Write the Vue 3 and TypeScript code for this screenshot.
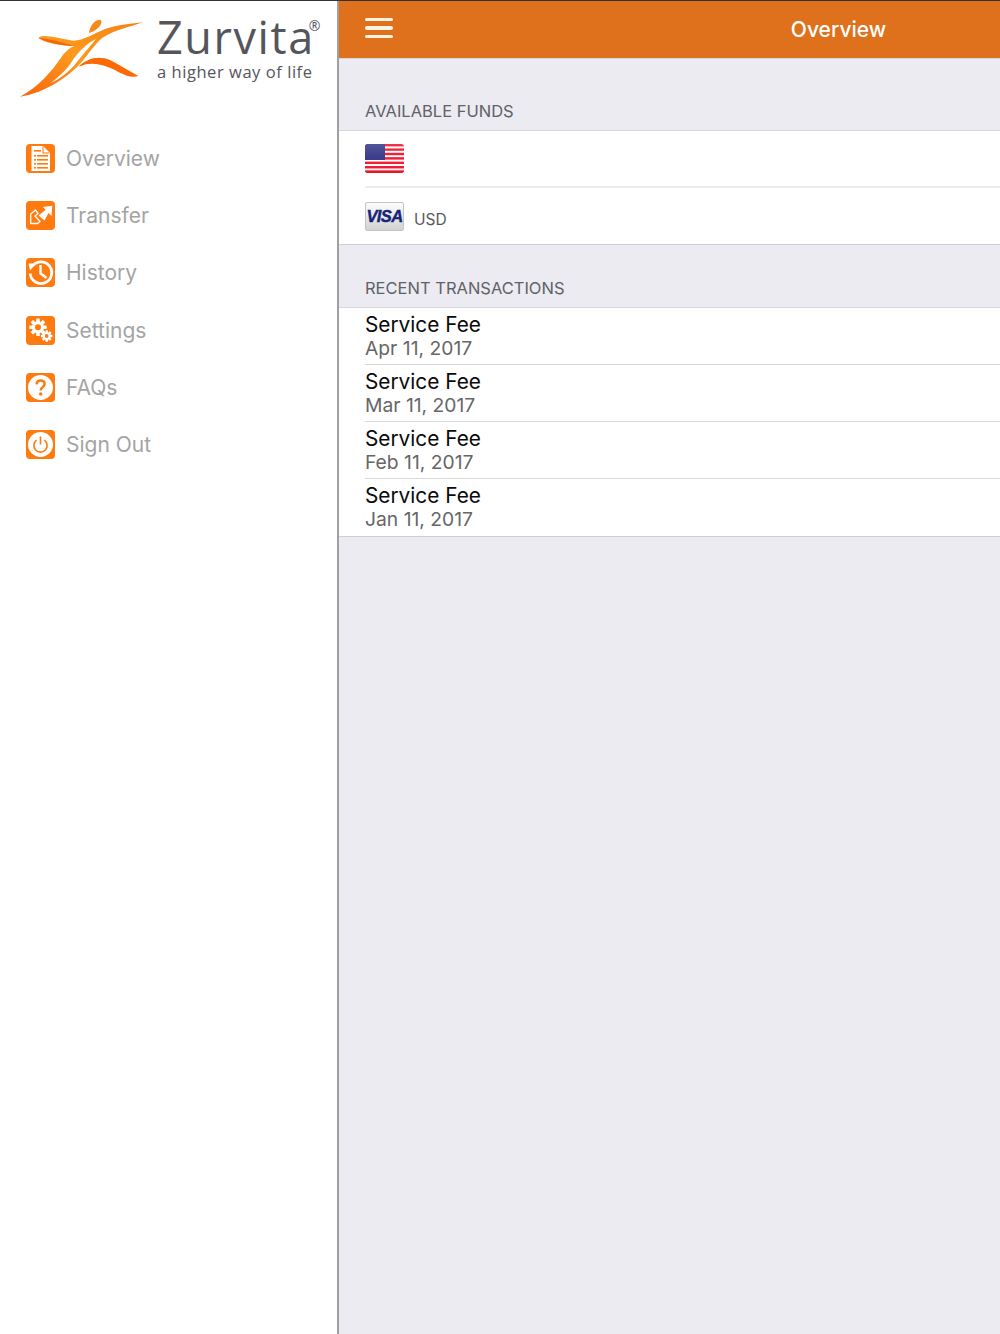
<script setup lang="ts">
interface NavItem {
  label: string;
  icon: string;
}
interface Transaction {
  title: string;
  date: string;
}

const navItems: NavItem[] = [
  { label: 'Overview', icon: 'overview' },
  { label: 'Transfer', icon: 'transfer' },
  { label: 'History', icon: 'history' },
  { label: 'Settings', icon: 'settings' },
  { label: 'FAQs', icon: 'faqs' },
  { label: 'Sign Out', icon: 'signout' },
];

const transactions: Transaction[] = [
  { title: 'Service Fee', date: 'Apr 11, 2017' },
  { title: 'Service Fee', date: 'Mar 11, 2017' },
  { title: 'Service Fee', date: 'Feb 11, 2017' },
  { title: 'Service Fee', date: 'Jan 11, 2017' },
];

const docRows = [11, 15, 19, 23];
const stripes = [0, 1, 2, 3, 4, 5, 6];
const teeth = [0, 45, 90, 135];
</script>

<template>
  <div class="app">
    <aside class="sidebar">
      <div class="brand">
        <svg class="mark" viewBox="0 0 390 255" width="130" height="85">
          <defs>
            <linearGradient id="swoosh" x1="0" y1="1" x2="1" y2="0">
              <stop offset="0" stop-color="#f9640a" />
              <stop offset="0.5" stop-color="#fd9a1e" />
              <stop offset="1" stop-color="#f58212" />
            </linearGradient>
          </defs>
          <path d="M222 54C224 34 238 14 254 14C266 16 258 42 222 54Z" fill="#f58a1a" />
          <path d="M70 68C85 55 130 70 175 77C200 78 240 55 270 42C310 30 350 25 385 22C345 35 300 45 262 68C245 82 225 110 205 135C170 180 90 235 15 245C70 215 110 170 140 125C155 105 170 95 178 93C140 92 90 85 70 68Z" fill="url(#swoosh)" />
          <path d="M70 68C100 85 140 90 178 93C140 80 100 72 70 68Z" fill="#f2660a" />
          <path d="M243 72C215 85 190 110 170 140C155 165 130 185 106 205C135 192 165 168 183 145C203 118 225 95 243 72Z" fill="#fff" />
          <path d="M190 155C215 130 250 120 285 135C315 150 345 170 370 183C350 190 325 180 300 165C270 150 240 142 212 148C205 150 195 155 190 155Z" fill="#fb6a05" />
        </svg>
        <div class="wordmark">
          <div class="name">Zurvita<sup>®</sup></div>
          <div class="tagline">a higher way of life</div>
        </div>
      </div>

      <nav class="nav">
        <div v-for="item in navItems" :key="item.label" class="nav-item">
          <span class="nav-icon">
            <svg viewBox="0 0 29 29" width="29" height="29">
              <template v-if="item.icon === 'overview'">
                <path d="M5.5 2H17L24 9V27H5.5Z" fill="#fff" />
                <path d="M17 2.5V9H23.5" fill="none" stroke="#ff7a0f" stroke-width="1.1" />
                <g fill="#ff7a0f">
                  <rect x="8" y="6" width="7" height="1.6" />
                  <template v-for="y in docRows" :key="y">
                    <rect x="8" :y="y" width="2" height="1.6" />
                    <rect x="11" :y="y" width="11" height="1.6" />
                  </template>
                </g>
              </template>
              <template v-else-if="item.icon === 'transfer'">
                <path d="M26.3 4.7L25.5 15L22.5 12L18.5 19.5L12.5 14.5L19.5 9L17 6Z" fill="#fff" />
                <path d="M4.7 22.5V13L9.5 9L12 12.5L9 15L14 20.5L11.5 22.5Z" fill="none" stroke="#fff" stroke-width="1.3" />
              </template>
              <template v-else-if="item.icon === 'history'">
                <path d="M6.5 8A10.8 10.8 0 1 1 4.2 15.5" fill="none" stroke="#fff" stroke-width="2.8" />
                <path d="M2.5 5.5L10 5.5L4 12.5Z" fill="#fff" />
                <path d="M14.5 7V15.3L20.5 20" fill="none" stroke="#fff" stroke-width="2.4" />
              </template>
              <template v-else-if="item.icon === 'settings'">
                <g fill="#fff">
                  <rect v-for="a in teeth" :key="a" x="10.2" y="2.6" width="3.6" height="17.4" rx="0.6" :transform="`rotate(${a} 12 11.3)`" />
                  <circle cx="12" cy="11.3" r="6" />
                  <rect v-for="a in teeth" :key="`s${a}`" x="19.5" y="14.3" width="2.4" height="11.4" rx="0.5" :transform="`rotate(${a} 20.7 20)`" />
                  <circle cx="20.7" cy="20" r="4" />
                </g>
                <circle cx="12" cy="11.3" r="3" fill="#ff7a0f" />
                <circle cx="20.7" cy="20" r="1.9" fill="#ff7a0f" />
              </template>
              <template v-else-if="item.icon === 'faqs'">
                <circle cx="14.5" cy="14.5" r="12.5" fill="#fff" />
                <path d="M10.6 11.4C10.8 8.8 12.4 7.6 14.6 7.6C17 7.6 18.6 9 18.6 11C18.6 12.6 17.7 13.4 16.5 14.3C15.2 15.2 14.7 15.9 14.7 17.6" fill="none" stroke="#ff7a0f" stroke-width="2.5" />
                <circle cx="14.7" cy="21" r="1.7" fill="#ff7a0f" />
              </template>
              <template v-else>
                <circle cx="14.5" cy="14.5" r="12.5" fill="#fff" />
                <path d="M10.6 10.2A6.6 6.6 0 1 0 18.4 10.2" fill="none" stroke="#ff7a0f" stroke-width="1.6" />
                <rect x="13.7" y="6.5" width="1.6" height="8" fill="#ff7a0f" />
              </template>
            </svg>
          </span>
          <span class="nav-label">{{ item.label }}</span>
        </div>
      </nav>
    </aside>

    <main class="main">
      <header class="topbar">
        <div class="burger"><i></i><i></i><i></i></div>
        <div class="topbar-title">Overview</div>
      </header>

      <div class="section-label funds-label">AVAILABLE FUNDS</div>
      <section class="group">
        <div class="fund-row">
          <svg class="flag" viewBox="0 0 39 29" width="39" height="29">
            <defs>
              <pattern id="stars" width="2" height="2" patternUnits="userSpaceOnUse">
                <rect width="2" height="2" fill="#2c2d80" />
                <circle cx="1" cy="1" r="0.45" fill="#a9abd8" />
              </pattern>
              <linearGradient id="gloss" x1="0" y1="0" x2="0" y2="1">
                <stop offset="0" stop-color="#fff" stop-opacity="0.12" />
                <stop offset="0.5" stop-color="#fff" stop-opacity="0" />
                <stop offset="1" stop-color="#700" stop-opacity="0.12" />
              </linearGradient>
            </defs>
            <rect width="39" height="29" fill="#fff" />
            <rect v-for="s in stripes" :key="s" x="0" :y="s * 4.4" width="39" height="2.4" fill="#f21830" />
            <rect y="27" width="39" height="2" fill="#f21830" />
            <rect width="20" height="16" fill="url(#stars)" />
            <rect width="39" height="29" fill="url(#gloss)" />
          </svg>
        </div>
        <div class="fund-row visa-row">
          <div class="visa"><span>VISA</span></div>
          <span class="currency">USD</span>
        </div>
      </section>

      <div class="section-label recent-label">RECENT TRANSACTIONS</div>
      <section class="group">
        <div v-for="t in transactions" :key="t.date" class="tx-row">
          <div class="tx-title">{{ t.title }}</div>
          <div class="tx-date">{{ t.date }}</div>
        </div>
      </section>
    </main>
  </div>
</template>

<style>
html,
body {
  margin: 0;
  background: #fff;
}
</style>

<style scoped>
.app {
  display: flex;
  height: 1333px;
  border-top: 1px solid #333;
  overflow: hidden;
  font-family: Inter, "Liberation Sans", sans-serif;
}

.sidebar {
  flex: 0 0 337px;
  background: #fff;
  border-right: 2px solid #a0a0a0;
  box-shadow: -2px 0 2px #d4d4d4;
  position: relative;
  z-index: 1;
}

.brand {
  display: flex;
  height: 129px;
  padding: 13px 0 0 0;
  box-sizing: border-box;
}

.mark {
  margin: 1px 0 0 15px;
}

.wordmark {
  margin-left: 12px;
  color: #55555c;
  font-family: "Open Sans", sans-serif;
}

.name {
  font-size: 45px;
  font-weight: 500;
  line-height: 46px;
  height: 46px;
  letter-spacing: 1.6px;
  white-space: nowrap;
}

.name sup {
  font-size: 14px;
  font-weight: 400;
  line-height: 0;
  vertical-align: 23px;
  margin-left: -6px;
}

.tagline {
  font-size: 16.5px;
  font-weight: 500;
  line-height: 20px;
  margin-top: 2px;
  letter-spacing: 0.55px;
  white-space: nowrap;
}

.nav-item {
  display: flex;
  align-items: center;
  height: 57.2px;
  padding-left: 26px;
}

.nav-icon {
  display: block;
  width: 29px;
  height: 29px;
  border-radius: 4px;
  background: #ff7a0f;
}

.nav-icon svg {
  display: block;
}

.nav-label {
  margin-left: 11px;
  font-size: 21px;
  color: #a4a4a4;
}

.main {
  flex: 1;
  background: #ebebf1;
}

.topbar {
  display: flex;
  align-items: center;
  height: 57px;
  background: #e0711c;
  border-bottom: 1px solid #d5d5d8;
  padding-left: 26px;
  position: relative;
}

.burger {
  display: flex;
  flex-direction: column;
  gap: 5px;
  margin-top: -3px;
}

.burger i {
  display: block;
  width: 28px;
  height: 3.5px;
  border-radius: 2px;
  background: #fff3e4;
}

.topbar-title {
  position: absolute;
  left: 338px;
  right: 0;
  top: 16px;
  text-align: center;
  color: #fff;
  font-size: 21px;
  font-weight: 500;
  line-height: 26px;
}

.section-label {
  padding-left: 26px;
  font-size: 16.5px;
  line-height: 20px;
  color: #616166;
}

.funds-label {
  padding-top: 42px;
  padding-bottom: 9px;
}

.recent-label {
  padding-top: 33px;
  padding-bottom: 9px;
}

.group {
  background: #fff;
  border-top: 1px solid #d8d8dc;
  border-bottom: 1px solid #cfcfd3;
}

.fund-row {
  display: flex;
  align-items: center;
  height: 57px;
  margin-left: 26px;
  border-bottom: 2px solid #ededf0;
  box-sizing: border-box;
}

.visa-row {
  height: 56px;
  border-bottom: 0;
}

.flag {
  border-radius: 3px;
  margin-top: -1px;
}

.visa {
  width: 39px;
  height: 29px;
  box-sizing: border-box;
  border: 1px solid #c4c4c4;
  border-radius: 2px;
  background: linear-gradient(#fdfdfd, #d2d2d2);
  display: flex;
  align-items: center;
  justify-content: center;
}

.visa span {
  font-family: "Liberation Sans", sans-serif;
  font-size: 16.5px;
  font-weight: 700;
  font-style: italic;
  color: #16237a;
  letter-spacing: -0.6px;
  -webkit-text-stroke: 0.4px #16237a;
}

.currency {
  margin-left: 10px;
  margin-top: 7px;
  font-size: 15.5px;
  color: #58585c;
}

.tx-row {
  margin-left: 26px;
  height: 57px;
  box-sizing: border-box;
  padding-top: 4px;
  border-bottom: 1px solid #d8d8dc;
}

.tx-row:last-child {
  border-bottom: 0;
}

.tx-title {
  font-size: 20.8px;
  line-height: 25px;
  color: #0a0a0a;
}

.tx-date {
  font-size: 19.3px;
  line-height: 23px;
  color: #666;
}
</style>
